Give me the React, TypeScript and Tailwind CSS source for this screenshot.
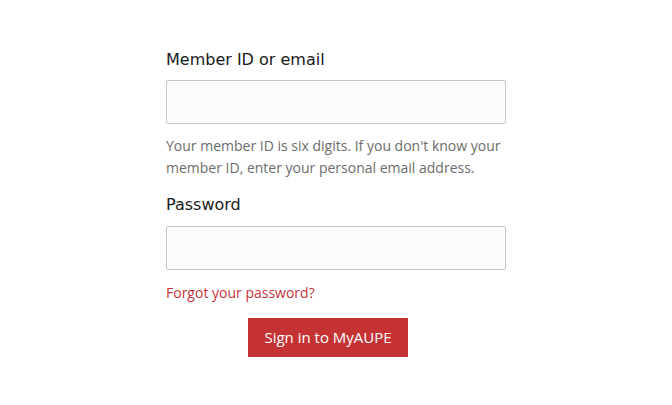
import React from 'react';

const labelFont = { fontFamily: '"DejaVu Sans", sans-serif' };

export default function App() {
  return (
    <div className="w-[672px] h-[405px] bg-white flex justify-center" style={{ fontFamily: '"Open Sans", sans-serif' }}>
      <form className="w-[340px] pt-[49px] flex flex-col" onSubmit={(e) => e.preventDefault()}>
        <label className="text-[16px] leading-[22px] text-[#1a1a1a]" style={labelFont}>Member ID or email</label>
        <input className="mt-[9px] h-[44px] rounded-[2px] border border-[#c9c7c3] bg-[#fcfbfa] px-3" />
        <p className="mt-[11px] text-[14px] leading-[22px] text-[#6c6c6c]">
          Your member ID is six digits. If you don't know your member ID, enter your personal email address.
        </p>
        <label className="mt-[15px] text-[16px] leading-[22px] text-[#1a1a1a]" style={labelFont}>Password</label>
        <input type="password" className="mt-[10px] h-[44px] rounded-[2px] border border-[#c9c7c3] bg-[#fcfbfa] px-3" />
        <a href="#" className="mt-[12px] text-[14px] leading-[22px] text-[#c5333a]">Forgot your password?</a>
        <div className="mt-[14px] flex">
          <button type="submit" className="ml-[82px] w-[160px] h-[39px] bg-[#c53234] text-white text-[15px]">Sign in to MyAUPE</button>
        </div>
      </form>
    </div>
  );
}
